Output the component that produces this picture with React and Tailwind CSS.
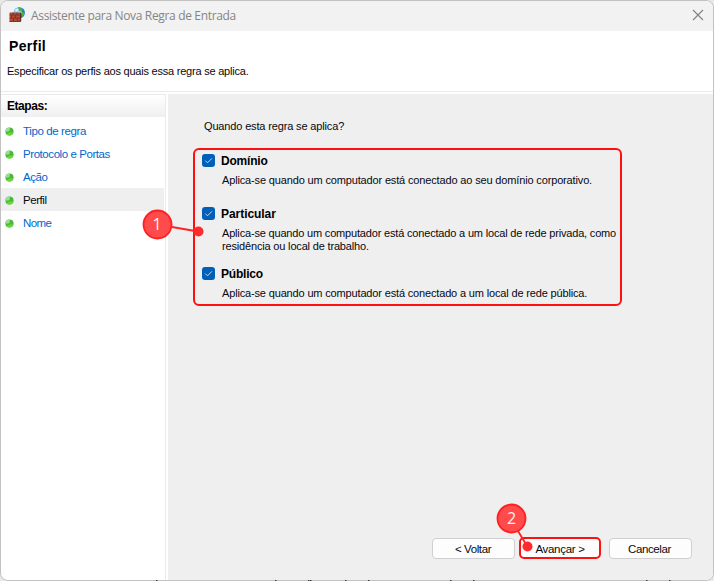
import React from "react";

const steps = [
  { label: "Tipo de regra", track: "tracking-[-0.38px]" },
  { label: "Protocolo e Portas", track: "tracking-[-0.43px]" },
  { label: "Ação", track: "tracking-[-0.4px]" },
  { label: "Perfil", active: true, track: "tracking-[-0.45px]" },
  { label: "Nome", track: "tracking-[-0.6px]" },
];

// Slivers of the page behind the window that show along its bottom edge.
const slivers = [156, 275, 308, 310, 345, 368, 450, 473, 646, 669];

function FirewallIcon() {
  return (
    <svg width="17" height="16" viewBox="0 0 17 16" className="block">
      <circle cx="10.300" cy="5.800" r="5.600" fill="#2374cc" />
      <circle cx="9" cy="4.800" r="3.900" fill="#8fd3f6" />
      <path d="M9.500.6 12.500 1l1.500 2-1 1.500-2.500-.5-1-1.500zM12.500 5.500l2.800-.5-.3 3-1.800 2z" fill="#4fb03a" />
      <path d="M6 3.500 8 1.500l1.500.8L8 4.500z" fill="#eaf8fd" />
      <path d="M.5 5.500h10.500v9.500H.5z" fill="#b24a33" />
      <path d="M.5 8h10.500M.5 11h10.500M.5 14.500h10.500M4 5.500v2.500M8 5.500v2.500M2.500 8v3M6.500 8v3M4.500 11v3M8.500 11v3" stroke="#6e2d20" strokeWidth="0.700" fill="none" />
      <path d="M11 5.500l1.200.5v8.500L11 15z" fill="#622a20" />
    </svg>
  );
}

function Bullet() {
  return (
    <svg width="9" height="9" viewBox="0 0 9 9" className="mt-[2px] block">
      <circle cx="4.500" cy="4.500" r="4.100" fill="#45bd33" />
      <path d="M.5 4.700A4 4 0 0 1 5 .5L4.300 4.200z" fill="#a5d99d" />
      <path d="M1.200 7A4.100 4.100 0 0 0 8.400 5.500L4.600 5.600z" fill="#6ed43a" />
    </svg>
  );
}

function Option({ title, children, titleTrack }) {
  return (
    <div>
      <div className="flex h-[13px] items-center">
        <span className="flex h-[13px] w-[13px] items-center justify-center rounded-[3px] bg-[#005fb8]">
          <svg width="9" height="9" viewBox="0 0 9 9">
            <path d="M1.300 4.600 3.500 6.800 7.900 2.400" fill="none" stroke="#c5dcf0" strokeWidth="1" />
          </svg>
        </span>
        <span className={"ml-[6px] whitespace-nowrap text-[12px] font-bold text-black " + titleTrack}>{title}</span>
      </div>
      <div className="ml-[20px] mt-[7px] whitespace-nowrap leading-[13px]">{children}</div>
    </div>
  );
}

export default function App() {
  return (
    <div className="relative h-[581px] w-[714px] overflow-hidden bg-[#e8e8e8] font-['Liberation_Sans',Arial,sans-serif] text-[11px] text-[#08080f]">
      <div className="flex h-[581px] flex-col overflow-hidden rounded-[8px] border border-[#c2c2c2] bg-white">
        <header className="flex h-[30px] shrink-0 items-center bg-[#f2f2f2] pl-[8px] pr-[9px]">
          <div className="-mt-[2px]">
            <FirewallIcon />
          </div>
          <span className="ml-[5px] whitespace-nowrap font-['Open_Sans','Noto_Sans',sans-serif] text-[12px] tracking-[-0.34px] text-[#858585]">
            Assistente para Nova Regra de Entrada
          </span>
          <svg width="12" height="12" viewBox="0 0 12 12" className="-mt-[2px] ml-auto">
            <path d="M1 1l10 10M11 1 1 11" stroke="#808080" strokeWidth="1.100" />
          </svg>
        </header>

        <section className="h-[61px] shrink-0 border-b border-[#ebebeb] pl-[6px] pt-[7px]">
          <h1 className="ml-[2px] text-[14px] font-bold leading-[16px] tracking-[0.35px] text-black">
            <span>Perfil</span>
          </h1>
          <p className="mt-[11px] leading-[13px] tracking-[-0.22px]">
            <span>Especificar os perfis aos quais essa regra se aplica.</span>
          </p>
        </section>

        <div className="mt-[2px] flex min-h-0 flex-1">
          <aside className="mr-[2px] w-[165px] shrink-0 border-r border-[#ebebeb]">
            <div className="mb-[2px] flex h-[23px] items-center border-t border-[#ebebeb] bg-gradient-to-b from-white to-[#efefef] pl-[6px] text-[12px] font-bold tracking-[-0.45px] text-black">
              <span>Etapas:</span>
            </div>
            {steps.map((s) => (
              <div
                key={s.label}
                className={"flex h-[23px] items-center pl-[4px] " + (s.active ? "mr-[1px] bg-[#efefef] text-[#08080f]" : "text-[#0066cc]")}
              >
                <Bullet />
                <span className={"ml-[9px] mt-[2px] whitespace-nowrap text-[11.5px] leading-[15px] " + s.track}>{s.label}</span>
              </div>
            ))}
          </aside>

          <main className="flex flex-1 flex-col bg-[#efefef] pl-[34px] pt-[26px]">
            <p className="ml-[2px] leading-[13px] tracking-[-0.15px]">
              <span>Quando esta regra se aplica?</span>
            </p>
            <div className="mt-[21px] flex flex-col">
              <Option title="Domínio" titleTrack="tracking-[-0.2px]">
                <span className="tracking-[-0.15px]">Aplica-se quando um computador está conectado ao seu domínio corporativo.</span>
              </Option>
              <div className="mt-[20px]">
                <Option title="Particular" titleTrack="tracking-[-0.05px]">
                  <span className="tracking-[-0.177px]">Aplica-se quando um computador está conectado a um local de rede privada, como</span>
                  <br />
                  <span className="tracking-[-0.17px]">residência ou local de trabalho.</span>
                </Option>
              </div>
              <div className="mt-[14px]">
                <Option title="Público" titleTrack="tracking-[-0.2px]">
                  <span className="tracking-[-0.157px]">Aplica-se quando um computador está conectado a um local de rede pública.</span>
                </Option>
              </div>
            </div>
            <div className="mb-[21px] mr-[21px] mt-auto flex items-center justify-end">
              <button className="h-[21px] w-[83px] rounded-[4px] border border-[#d0d0d0] bg-[#fdfdfd] pr-[1px] pt-[2px] text-[11.5px] leading-[15px] tracking-[-0.4px]">&lt; Voltar</button>
              <button className="ml-[4px] h-[22px] w-[82px] rounded-[5px] border-2 border-[#f11] bg-[#fdfdfd] pt-[2px] text-[11.5px] leading-[15px] tracking-[-0.3px]">Avançar &gt;</button>
              <button className="ml-[8px] h-[21px] w-[83px] rounded-[4px] border border-[#d0d0d0] bg-[#fdfdfd] pr-[2px] pt-[2px] text-[11.5px] leading-[15px] tracking-[-0.4px]">Cancelar</button>
            </div>
          </main>
        </div>
      </div>

      <div className="absolute left-[193px] top-[148px] h-[158px] w-[429px] rounded-[6px] border-2 border-[#ff1010]" />
      <svg className="absolute inset-0" width="714" height="581" viewBox="0 0 714 581">
        {slivers.map((x) => (
          <rect key={x} x={x} y="580" width="1.500" height="1" fill="#3a3a48" />
        ))}
        <path d="M172 227l26 4.500M518 531l9 15" stroke="#ff2222" strokeWidth="1.800" />
        <circle cx="157.500" cy="224.500" r="14" fill="#ff4b4b" stroke="#ff2020" strokeWidth="1.800" />
        <circle cx="198.500" cy="231.500" r="5" fill="#ff2a2a" />
        <circle cx="511.500" cy="518.500" r="14" fill="#ff4b4b" stroke="#ff2020" strokeWidth="1.800" />
        <circle cx="527.500" cy="546.500" r="5" fill="#ff2a2a" />
        <g fill="#fff0f0" fontFamily="'Open Sans','Noto Sans',sans-serif" fontSize="16" textAnchor="middle">
          <text x="157" y="230">1</text>
          <text x="511.500" y="524">2</text>
        </g>
      </svg>
    </div>
  );
}
